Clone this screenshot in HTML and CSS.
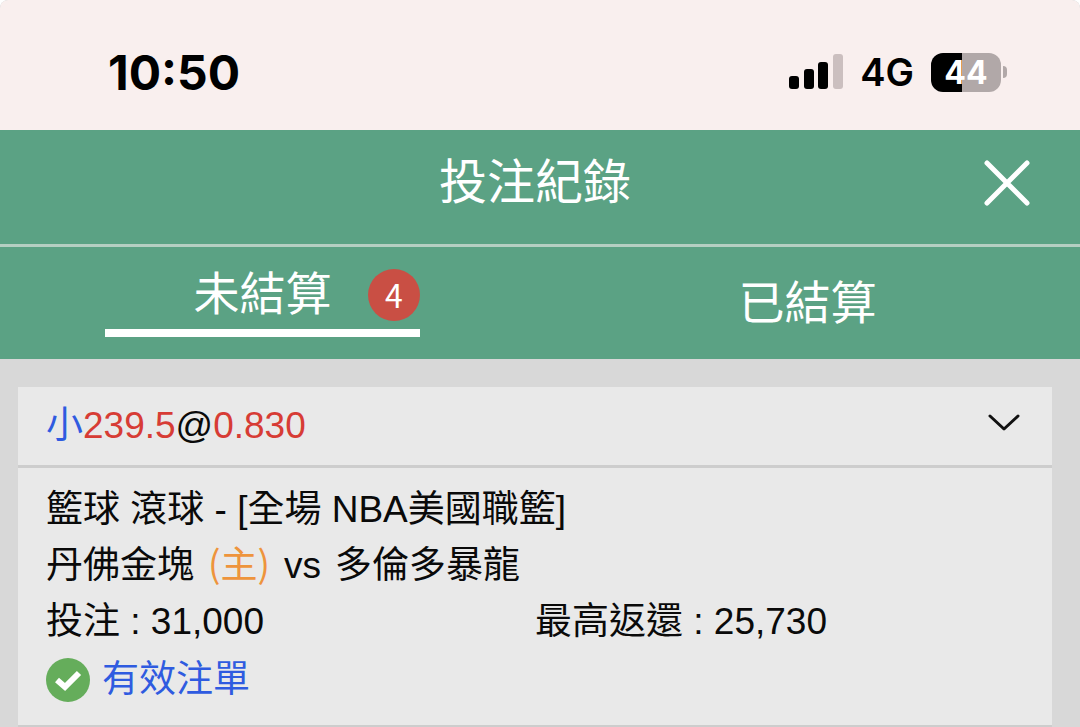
FILE: index.html
```
<!DOCTYPE html>
<html lang="zh-Hant">
<head>
  <meta charset="UTF-8">
  <meta name="viewport" content="width=device-width, initial-scale=1">
  <title>投注紀錄</title>
  <link rel="stylesheet" href="styles.css">
</head>
<body>
  <div class="status-bar">
    <span class="time">10:50</span>
    <div class="status-icons">
      <svg class="signal" width="54" height="36" viewBox="0 0 54 36" aria-hidden="true">
        <rect x="0" y="22" width="10" height="13" rx="3"/>
        <rect x="15" y="15" width="10" height="20" rx="3"/>
        <rect x="29" y="8" width="10" height="27" rx="3"/>
        <rect x="44" y="0" width="10" height="35" rx="3" fill="#cbbfbf"/>
      </svg>
      <span class="network">4G</span>
      <div class="battery"><span class="level">44</span></div>
    </div>
  </div>

  <header class="header">
    <h1>投注紀錄</h1>
    <button class="close" aria-label="關閉">
      <svg width="46" height="46" viewBox="0 0 46 46">
        <path d="M3 3L43 43M43 3L3 43" stroke="#fff" stroke-width="5" stroke-linecap="round"/>
      </svg>
    </button>
  </header>

  <nav class="tabs">
    <button class="tab active"><span class="tab-label">未結算<span class="badge">4</span></span></button>
    <button class="tab">已結算</button>
  </nav>

  <main class="list">
    <section class="bet">
      <div class="bet-head">
        <div><span class="blue">小</span><span class="red">239.5</span>@<span class="red">0.830</span></div>
        <button class="toggle" aria-label="展開">
          <svg width="32" height="18" viewBox="0 0 32 18">
            <path d="M2 2L16 15L30 2" fill="none" stroke="#111" stroke-width="3" stroke-linecap="round" stroke-linejoin="round"/>
          </svg>
        </button>
      </div>
      <div class="bet-body">
        <p>籃球 滾球 - [全場 NBA美國職籃]</p>
        <p class="teams"><span>丹佛金塊</span><span class="home">(主)</span><span>vs</span><span>多倫多暴龍</span></p>
        <div class="amounts">
          <span>投注 : 31,000</span>
          <span>最高返還 : 25,730</span>
        </div>
        <p class="valid">
          <svg width="44" height="44" viewBox="0 0 44 44" aria-hidden="true">
            <circle cx="22" cy="22" r="22" fill="#65ad5b"/>
            <path d="M11 22L19 29L33 15" fill="none" stroke="#fff" stroke-width="6"/>
          </svg>
          <span class="blue">有效注單</span>
        </p>
      </div>
    </section>
  </main>
</body>
</html>
```
FILE: styles.css
```
* {
  box-sizing: border-box;
}
html {
  background: #fff;
}
body {
  margin: 0;
  min-height: 100vh;
  background: #d8d8d8;
  border-radius: 8px 8px 0 0;
  color: #0a0a0a;
  font-family: "Liberation Sans", "Noto Sans CJK TC", sans-serif;
  font-size: 37px;
}
button {
  padding: 0;
  border: none;
  background: none;
  color: inherit;
  font: inherit;
  cursor: pointer;
}
svg {
  display: block;
}
h1, p {
  margin: 0;
}

/* status bar */
.status-bar {
  display: flex;
  justify-content: space-between;
  align-items: center;
  height: 130px;
  padding: 14px 79px 0 108px;
  background: #f9efee;
  border-radius: 8px 8px 0 0;
  color: #000;
  font-family: Inter, sans-serif;
}
.time {
  font-size: 48px;
  font-weight: 700;
}
.status-icons {
  display: flex;
  align-items: center;
  gap: 17px;
}
.network {
  font-size: 38px;
  font-weight: 600;
}
.battery {
  position: relative;
  width: 70px;
  height: 39px;
  border-radius: 12px;
  background: linear-gradient(90deg, #000 44%, #b1a8a8 44%);
  color: #fff;
  font-size: 32px;
  font-weight: 700;
  line-height: 39px;
  text-align: center;
}
.battery::after {
  content: "";
  position: absolute;
  top: 13px;
  right: -6px;
  width: 4px;
  height: 12px;
  border-radius: 0 4px 4px 0;
  background: #b1a8a8;
}

/* title */
.header {
  display: grid;
  grid-template-columns: 1fr auto 1fr;
  align-items: center;
  height: 117px;
  padding: 0 50px 8px 40px;
  border-bottom: 3px solid #b5cfc2;
  background: #5ba284;
  color: #fff;
}
.header h1 {
  grid-column: 2;
  font-size: 48px;
  font-weight: 400;
  line-height: 60px;
}
.close {
  justify-self: end;
}

/* tabs */
.tabs {
  display: flex;
  gap: 20px;
  height: 112px;
  padding-right: 10px;
  background: #5ba284;
  color: #fff;
  font-size: 46px;
}
.tab {
  flex: 1;
  display: flex;
  justify-content: center;
  align-items: center;
  line-height: 50px;
}
.tab-label {
  position: relative;
  width: 60%;
  padding-bottom: 10px;
  border-bottom: 8px solid #fff;
}
.badge {
  position: absolute;
  top: 0;
  right: 0;
  width: 52px;
  height: 52px;
  border-radius: 50%;
  background: #c94f44;
  font-family: "Noto Sans CJK TC", sans-serif;
  font-size: 32px;
  line-height: 50px;
}

/* bet list */
.list {
  padding: 28px 28px 0 18px;
}
.bet {
  border-bottom: 3px solid #cdcdcd;
  background: #e9e9e9;
}
.bet-head {
  display: flex;
  justify-content: space-between;
  align-items: center;
  height: 81px;
  padding: 0 32px 0 28px;
  border-bottom: 3px solid #cdcdcd;
  line-height: 78px;
}
.toggle {
  padding-bottom: 6px;
}
.bet-body {
  padding: 14px 28px 15px;
  line-height: 56px;
}
.teams {
  display: flex;
  align-items: baseline;
  gap: 14px;
  height: 56px;
}
.amounts {
  display: grid;
  grid-template-columns: 1fr 1fr;
}
.valid {
  display: flex;
  align-items: center;
  gap: 12px;
  line-height: 60px;
}
.blue {
  color: #2f5be0;
}
.red {
  color: #d73c35;
}
.home {
  color: #ee943c;
  font-family: "Noto Sans CJK TC", sans-serif;
  line-height: 48px;
}
```
